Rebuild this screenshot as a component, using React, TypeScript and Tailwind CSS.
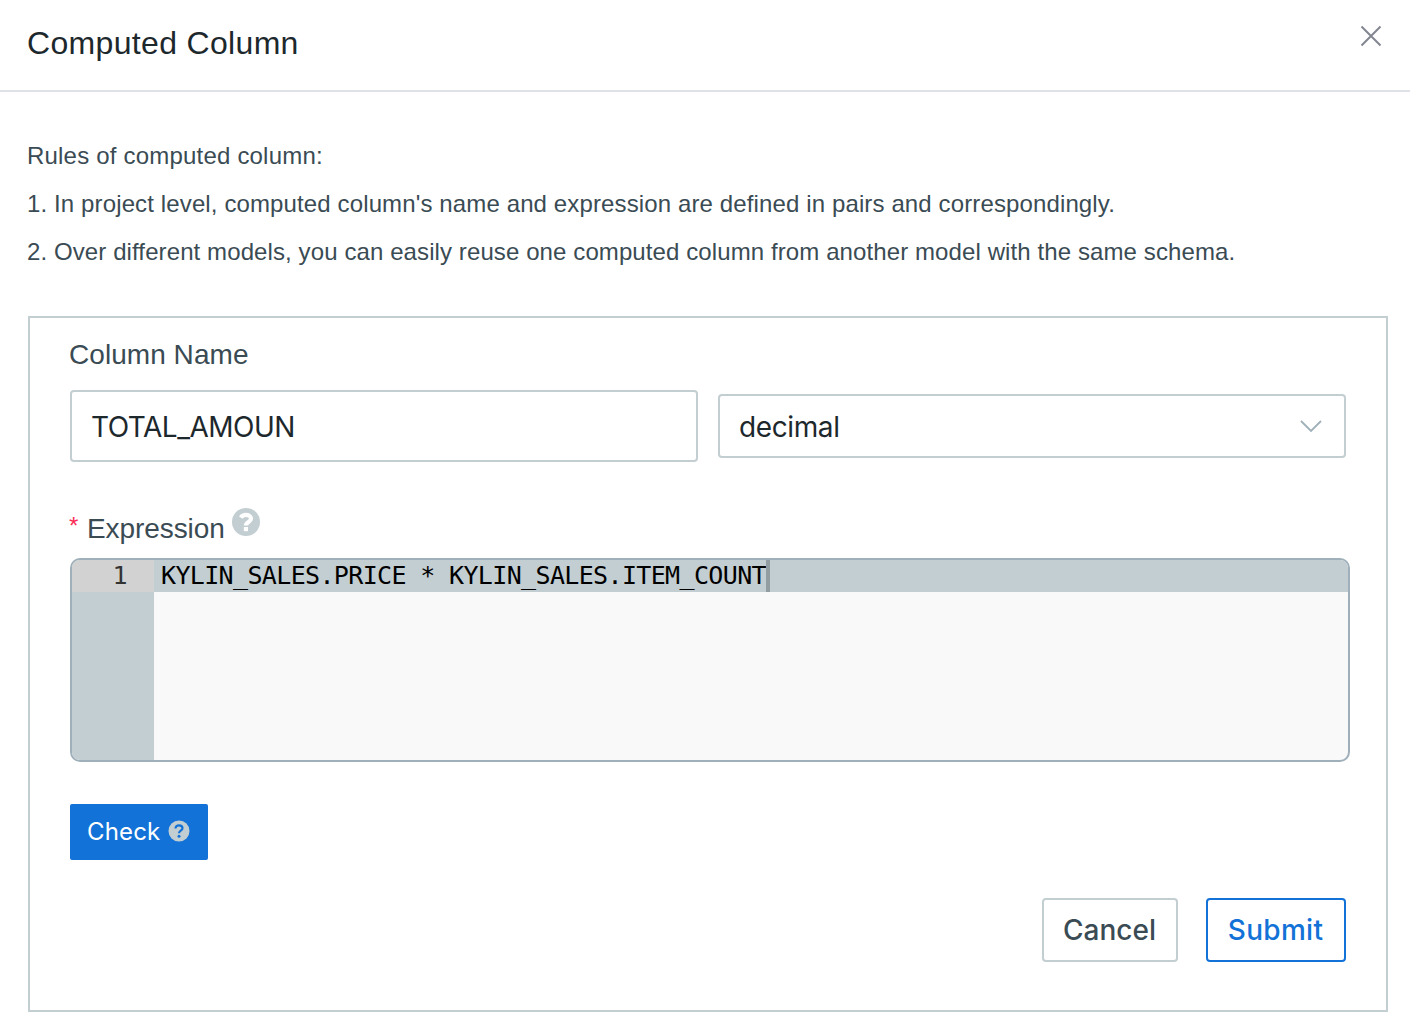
function HelpIcon({ className }: { className: string }) {
  return (
    <svg viewBox="0 0 28 28" className={className} fill="none" aria-hidden="true">
      <circle cx="14" cy="14" r="14" fill="#c3ced2" />
      <path d="M8.800 9.600C10 7.700 11.700 6.900 13.800 6.900c2.900 0 5.200 1.500 5.200 3.900 0 3.200-5.100 3.100-5.100 6.700" stroke="white" strokeWidth="4.200" />
      <path d="M11.800 19h4.200v4.200h-4.200z" fill="white" />
    </svg>
  );
}

function SmallHelpIcon({ className }: { className: string }) {
  return (
    <svg viewBox="0 0 22 22" className={className} fill="none" aria-hidden="true">
      <circle cx="11" cy="11" r="10.500" fill="#c3ced2" />
      <path d="M7.500 8.500C7.500 6.400 9 5.300 11 5.300s3.500 1.100 3.500 2.900c0 2.500-3.500 2.500-3.500 5" stroke="#1272d7" strokeWidth="2.200" />
      <circle cx="11" cy="16.300" r="1.500" fill="#1272d7" />
    </svg>
  );
}

export default function App() {
  return (
    <div className="h-[1018px] w-[1410px] overflow-hidden bg-white font-['Liberation_Sans',sans-serif] text-[#3a4b54]">
      <header className="flex h-[92px] items-start justify-between border-b-2 border-[#dfe3e9] pl-[27px] pr-7">
        <h1 className="mt-[23px] text-[32px] leading-10 whitespace-nowrap tracking-[0.330px] text-[#1d282d]">Computed Column</h1>
        <svg viewBox="0 0 22 22" className="mt-[25px] size-[22px]" fill="none" stroke="#838690" strokeWidth="2" aria-label="Close">
          <path d="M1.500 1.500l19 19M20.500 1.500l-19 19" />
        </svg>
      </header>

      <section className="h-[224px] pl-[27px] pt-10 text-[24px] leading-[48px] whitespace-nowrap">
        <p><span className="tracking-[0.200px]">Rules of computed column:</span></p>
        <p><span className="tracking-[0.125px]">1. In project level, computed column's name and expression are defined in pairs and correspondingly.</span></p>
        <p><span className="tracking-[0.100px]">2. Over different models, you can easily reuse one computed column from another model with the same schema.</span></p>
      </section>

      <main className="ml-7 flex h-[696px] w-[1360px] flex-col border-2 border-[#c3ced2] pl-10">
        <label className="-ml-px mt-[17px] h-[55px] text-[28px] leading-10 whitespace-nowrap"><span className="tracking-[0.050px]">Column Name</span></label>
        <div className="flex items-center gap-5 font-['Inter',sans-serif] text-[28px] text-[#1d282d]">
          <div className="flex h-[72px] w-[628px] items-center rounded-[4px] border-2 border-[#c3ced2] pt-px pl-[19px]">
            <span className="tracking-[-0.500px]">TOTAL_AMOUN</span>
          </div>
          <div className="flex h-16 w-[628px] items-center justify-between rounded-[4px] border-2 border-[#c3ced2] pl-[19px] pr-[22px]">
            <span className="pt-px tracking-[-0.380px]">decimal</span>
            <svg viewBox="0 0 22 12" className="h-3 w-[22px]" fill="none" stroke="#9fb0ba" strokeWidth="1.800">
              <path d="M1 1l10 10L21 1" />
            </svg>
          </div>
        </div>

        <div className="mt-[46px] flex h-[50px] items-start text-[28px] leading-10 whitespace-nowrap">
          <span className="-ml-px w-[18px] text-[24px] leading-9 text-[#fa2c55]">*</span>
          <span className="pt-px tracking-[-0.080px]">Expression</span>
          <HelpIcon className="ml-auto mr-[1126px] size-7" />
        </div>

        <div className="flex h-[204px] w-[1280px] shrink-0 overflow-hidden rounded-[10px] border-2 border-[#9fb0ba] bg-[#f9f9f9] font-['DejaVu_Sans_Mono',monospace] text-[25px] leading-8 tracking-[-0.648px] whitespace-pre">
          <div className="w-[82px] bg-[#c3ced2]">
            <div className="h-8 bg-[#d2d2d2] pr-[27px] text-right text-[#333]">1</div>
          </div>
          <div className="flex h-8 flex-1 bg-[#c3ced2] pl-[7px] text-black">
            <span className="w-[605px]">KYLIN_SALES.PRICE * KYLIN_SALES.ITEM_COUNT</span>
            <span className="h-8 w-1 bg-[#929da1]" />
          </div>
        </div>

        <button className="mt-[42px] flex h-14 w-[138px] shrink-0 items-center rounded-[2px] bg-[#1272d7] pl-[17px] font-['Inter',sans-serif] text-[24px] text-white">
          <span className="tracking-[0.150px]">Check</span>
          <SmallHelpIcon className="mb-0.5 ml-auto mr-[18px] size-[22px]" />
        </button>

        <div className="mt-[38px] mr-10 flex justify-end gap-7 font-['Inter',sans-serif] text-[28px] font-medium">
          <button className="h-16 w-[136px] rounded-[4px] border-2 border-[#c3ced2] pr-px tracking-[0.050px]">Cancel</button>
          <button className="h-16 w-[140px] rounded-[4px] border-2 border-[#1272d7] pr-px tracking-[0.300px] text-[#1272d7]">Submit</button>
        </div>
      </main>
    </div>
  );
}
